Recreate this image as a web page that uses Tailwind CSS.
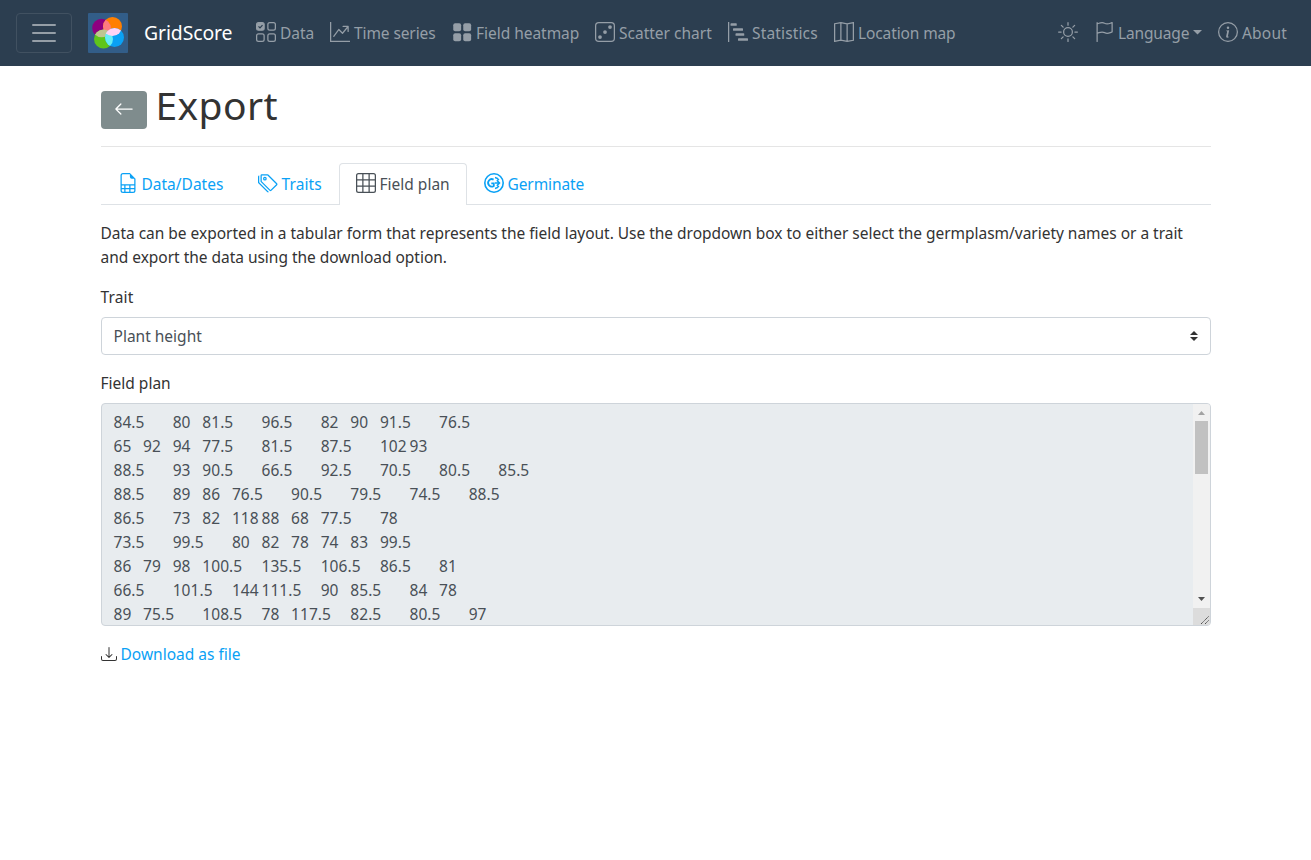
<!DOCTYPE html>
<html lang="en">
<head>
<meta charset="utf-8">
<title>GridScore</title>
<script src="https://cdn.jsdelivr.net/npm/@tailwindcss/browser@4"></script>
</head>
<body class="bg-white font-['Noto_Sans','Open_Sans',sans-serif] text-[15.5px] leading-6 text-[#333] h-[860px] overflow-hidden">
<nav class="h-[66px] bg-[#2c3e50] flex items-center text-[#959ea7] whitespace-nowrap">
  <button class="ml-4 w-14 h-10 rounded border border-[#415161] flex items-center justify-center">
    <svg class="w-[30px] h-[30px]" viewBox="0 0 30 30" stroke="#959ea7" stroke-width="2" stroke-linecap="round"><path d="M4 7h22M4 15h22M4 23h22"/></svg>
  </button>
  <svg class="ml-4 w-10 h-10" viewBox="0 0 40 40">
    <rect width="40" height="40" rx="1" fill="#325d88"/>
    <circle cx="13.5" cy="15" r="9.3" fill="#8e0080"/><circle cx="24.5" cy="13.5" r="9.5" fill="#ff7f00"/><circle cx="15.5" cy="26" r="9.5" fill="#5fc51a"/><circle cx="26.5" cy="24.5" r="9.5" fill="#0aa1f5"/>
    <clipPath id="a"><circle cx="13.5" cy="15" r="9.3"/></clipPath><clipPath id="b"><circle cx="24.5" cy="13.5" r="9.5"/></clipPath><clipPath id="c"><circle cx="15.5" cy="26" r="9.5"/></clipPath>
    <circle cx="24.5" cy="13.5" r="9.5" fill="#ff7b80" clip-path="url(#a)"/>
    <circle cx="15.5" cy="26" r="9.5" fill="#bfc591" clip-path="url(#a)"/>
    <circle cx="26.5" cy="24.5" r="9.5" fill="#66edf5" clip-path="url(#c)"/>
    <circle cx="26.5" cy="24.5" r="9.5" fill="#ffd3f5" clip-path="url(#b)"/>
  </svg>
  <span class="ml-4 w-28 text-white text-[19.4px] tracking-[-0.1px]"><span>GridScore</span></span>
  <a class="w-[74px] flex items-center gap-1"><svg class="w-5 h-5 shrink-0 -mt-0.5" viewBox="0 0 16 16" fill="none" stroke="currentColor"><rect x=".5" y=".5" width="6" height="6" rx="1.5" fill="currentColor"/><rect x="9.5" y=".5" width="6" height="6" rx="1.5"/><rect x=".5" y="9.5" width="6" height="6" rx="1.5"/><rect x="9.5" y="9.5" width="6" height="6" rx="1.5"/><path d="m2 3.5 1.2 1.2 2-2.2" stroke="#2c3e50"/></svg><span>Data</span></a>
  <a class="w-[123px] flex items-center gap-1"><svg class="w-5 h-5 shrink-0 -mt-0.5" viewBox="0 0 16 16" fill="currentColor"><path fill-rule="evenodd" d="M0 0h1v15h15v1H0V0zm10 3.5a.5.5 0 0 1 .5-.5h4a.5.5 0 0 1 .5.5v4a.5.5 0 0 1-1 0V4.9l-3.613 4.417a.5.5 0 0 1-.74.037L7.060 6.767l-3.656 5.027a.5.5 0 0 1-.808-.588l4-5.500a.5.5 0 0 1 .758-.060l2.609 2.610L13.445 4H10.500a.5.5 0 0 1-.5-.5z"/></svg><span class="tracking-[-0.1px]">Time series</span></a>
  <a class="w-[142px] flex items-center gap-1"><svg class="w-5 h-5 shrink-0 -mt-0.5 -ml-px" viewBox="0 0 16 16" fill="currentColor"><rect x="1" y="1" width="6.300" height="6.300" rx="1.500"/><rect x="9" y="1" width="6.300" height="6.300" rx="1.500"/><rect x="1" y="9" width="6.300" height="6.300" rx="1.500"/><rect x="9" y="9" width="6.300" height="6.300" rx="1.500"/></svg><span class="tracking-[-0.03px]">Field heatmap</span></a>
  <a class="w-[133px] flex items-center gap-1"><svg class="w-5 h-5 shrink-0 -mt-0.5" viewBox="0 0 16 16" fill="currentColor"><rect x=".5" y=".5" width="15" height="15" rx="2.500" fill="none" stroke="currentColor"/><circle cx="12" cy="4" r="1.500"/><circle cx="8" cy="8" r="1.500"/><circle cx="4" cy="12" r="1.500"/></svg><span>Scatter chart</span></a>
  <a class="w-[106px] flex items-center gap-1"><svg class="w-5 h-5 shrink-0 -mt-0.5" viewBox="0 0 16 16" fill="currentColor"><path d="M0 0h1v16H0z"/><rect x="2" y="1" width="5" height="2" rx=".5"/><rect x="4" y="5" width="8" height="2" rx=".5"/><rect x="6" y="9" width="7" height="2" rx=".5"/><rect x="8" y="13" width="8" height="2" rx=".5"/></svg><span class="tracking-[0.15px]">Statistics</span></a>
  <a class="w-[224px] flex items-center gap-1"><svg class="w-5 h-5 shrink-0 -mt-0.5" viewBox="0 0 16 16" fill="none" stroke="currentColor"><path d="M.5 1.400 5.500.5l5 .9 5-.9v14.100l-5 .9-5-.9-5 .9zM5.500.5v14.100M10.500 1.400v14.100"/></svg><span class="tracking-[-0.12px]">Location map</span></a>
  <a class="w-[36px]"><svg class="w-5 h-5 -mt-0.5" viewBox="0 0 16 16" fill="none" stroke="currentColor"><circle cx="8" cy="8" r="3.500"/><path stroke-linecap="round" d="M8 .5v2M8 13.500v2M.5 8h2M13.500 8h2M2.700 2.700l1.400 1.400M11.900 11.900l1.400 1.400M2.700 13.300l1.400-1.400M11.900 4.100l1.400-1.400"/></svg></a>
  <a class="w-[124px] flex items-center gap-1"><svg class="w-5 h-5 shrink-0 -mt-0.5" viewBox="0 0 16 16" fill="currentColor"><path d="M14.778.085A.5.5 0 0 1 15 .5V8a.5.5 0 0 1-.314.464L14.500 8l.186.464-.003.001-.006.003-.023.009a12.435 12.435 0 0 1-.397.150c-.264.095-.631.223-1.047.350-.816.252-1.879.523-2.710.523-.847 0-1.548-.280-2.158-.525l-.028-.010C7.680 8.710 7.140 8.500 6.500 8.500c-.700 0-1.638.230-2.437.477A19.626 19.626 0 0 0 3 9.342V15.500a.5.5 0 0 1-1 0V.5a.5.5 0 0 1 1 0v.282c.226-.079.496-.170.790-.260C4.606.272 5.670 0 6.500 0c.840 0 1.524.277 2.121.519l.043.018C9.286.788 9.828 1 10.500 1c.700 0 1.638-.230 2.437-.477a19.587 19.587 0 0 0 1.349-.476l.019-.007.004-.002h.001M14 1.221c-.220.078-.480.167-.766.255-.810.252-1.872.523-2.734.523-.886 0-1.592-.286-2.203-.534l-.008-.003C7.662 1.210 7.139 1 6.500 1c-.669 0-1.606.229-2.415.478A21.294 21.294 0 0 0 3 1.845v6.433c.220-.078.480-.167.766-.255C4.576 7.770 5.638 7.500 6.500 7.500c.847 0 1.548.280 2.158.525l.028.010C9.320 8.290 9.860 8.500 10.500 8.500c.668 0 1.606-.229 2.415-.478A21.317 21.317 0 0 0 14 7.655V1.222z"/></svg><span class="tracking-[-0.15px]">Language</span><svg class="w-[9px] h-[5px] shrink-0 -mt-0.5" viewBox="0 0 9 5" fill="currentColor"><path d="M0 0h9L4.500 4.500z"/></svg></a>
  <a class="flex items-center gap-1"><svg class="w-5 h-5 shrink-0 -mt-0.5" viewBox="0 0 16 16" fill="currentColor"><path d="M8 15A7 7 0 1 1 8 1a7 7 0 0 1 0 14zm0 1A8 8 0 1 0 8 0a8 8 0 0 0 0 16z"/><path d="m8.930 6.588-2.290.287-.082.380.450.083c.294.070.352.176.288.469l-.738 3.468c-.194.897.105 1.319.808 1.319.545 0 1.178-.252 1.465-.598l.088-.416c-.200.176-.492.246-.686.246-.275 0-.375-.193-.304-.533L8.930 6.588zM9 4.500a1 1 0 1 1-2 0 1 1 0 0 1 2 0z"/></svg><span class="tracking-[0.2px]">About</span></a>
</nav>
<main class="ml-[100.5px] w-[1110px] whitespace-nowrap">
  <header class="h-[81px] border-b border-[#e5e5e5] flex">
    <button class="mt-[25px] w-[46px] h-[38px] rounded bg-[#7f8c8d] flex items-center justify-center"><svg class="w-5 h-5 -mt-0.5" viewBox="0 0 16 16" fill="white"><path fill-rule="evenodd" d="M15 8a.5.5 0 0 0-.5-.5H2.707l3.147-3.146a.5.5 0 1 0-.708-.708l-4 4a.5.5 0 0 0 0 .708l4 4a.5.5 0 0 0 .708-.708L2.707 8.500H14.500A.5.5 0 0 0 15 8z"/></svg></button>
    <h1 class="ml-[9px] mt-[15px] text-[39px] leading-[48px] tracking-[0.4px]"><span>Export</span></h1>
  </header>
  <div class="mt-4 h-[42px] flex border-b border-[#dee2e6] text-[#0aa1f5]">
    <a class="w-[139px] pl-[17px] flex items-center gap-1"><svg class="w-5 h-5 shrink-0 -mt-0.5" viewBox="0 0 16 16" fill="currentColor"><path d="M14 14V4.500L9.500 0H4a2 2 0 0 0-2 2v12a2 2 0 0 0 2 2h8a2 2 0 0 0 2-2zM9.500 3A1.500 1.500 0 0 0 11 4.500h2V9H3V2a1 1 0 0 1 1-1h5.500v2zM3 12v-2h2v2H3zm0 1h2v2H4a1 1 0 0 1-1-1v-1zm3 2v-2h3v2H6zm4 0v-2h3v1a1 1 0 0 1-1 1h-2zm3-3h-3v-2h3v2zm-7 0v-2h3v2H6z"/></svg><span>Data/Dates</span></a>
    <a class="w-[99px] pl-[18px] flex items-center gap-1"><svg class="w-5 h-5 shrink-0 -mt-0.5" viewBox="0 0 16 16" fill="currentColor"><path d="M3 2v4.586l7 7L14.586 9l-7-7H3zM2 2a1 1 0 0 1 1-1h4.586a1 1 0 0 1 .707.293l7 7a1 1 0 0 1 0 1.414l-4.586 4.586a1 1 0 0 1-1.414 0l-7-7A1 1 0 0 1 2 6.586V2z"/><path d="M5.500 5a.5.5 0 1 1 0-1 .5.5 0 0 1 0 1zm0 1a1.500 1.500 0 1 0 0-3 1.500 1.500 0 0 0 0 3zM1 7.086a1 1 0 0 0 .293.707L8.750 15.250l-.043.043a1 1 0 0 1-1.414 0l-7-7A1 1 0 0 1 0 7.586V3a1 1 0 0 1 1-1v5.086z"/></svg><span class="tracking-[0.1px]">Traits</span></a>
    <a class="w-[128px] h-[42px] pb-px pl-4 shrink-0 flex items-center gap-1 rounded-t border border-b-0 border-[#dee2e6] bg-white text-[#495057]"><svg class="w-5 h-5 shrink-0 -mt-0.5" viewBox="0 0 16 16" fill="none" stroke="currentColor"><rect x=".5" y=".5" width="15" height="15" rx="1.500"/><path d="M.5 5.500h15M.5 10.500h15M5.500.5v15M10.500.5v15"/></svg><span>Field plan</span></a>
    <a class="pl-[17px] flex items-center gap-1"><svg class="w-5 h-5 shrink-0 -mt-0.5" viewBox="0 0 20 20" fill="none" stroke="currentColor"><circle cx="10" cy="10" r="9.200" stroke-width="1.600"/><path stroke-width="1.800" d="M9.600 6.600A3.700 3.700 0 1 0 9.800 13V10.400H7.300"/><path stroke-width="1.500" d="M11 4.500c1.800.4 3 1.200 3.800 2.700M11 15.500c1.800-.4 3-1.200 3.800-2.700M11 10h5M12.800 7.300l2.700 2.700-2.700 2.700"/></svg><span class="tracking-[-0.1px]">Germinate</span></a>
  </div>
  <p class="mt-4 tracking-[-0.025px]"><span>Data can be exported in a tabular form that represents the field layout. Use the dropdown box to either select the germplasm/variety names or a trait</span><br><span>and export the data using the download option.</span></p>
  <label class="block mt-4 tracking-[0.15px]"><span>Trait</span></label>
  <div class="mt-2 h-[38px] rounded border border-[#ced4da] pl-3 pr-3 flex items-center justify-between text-[#495057]"><span>Plant height</span><svg class="w-2 h-[10px]" viewBox="0 0 8 10" fill="#333"><path d="M0 4h8L4 0zM0 6h8L4 10z"/></svg></div>
  <label class="block mt-4"><span>Field plan</span></label>
  <div class="mt-2 h-[223px] rounded border border-[#ced4da] bg-[#e8ecef] flex overflow-hidden text-[#495057]">
<pre class="flex-1 pl-3 pt-1.5 font-['Noto_Sans','Open_Sans',sans-serif] tracking-[0.05px] [tab-size:29.6px]">84.5	80	81.5	96.5	82	90	91.5	76.5
65	92	94	77.5	81.5	87.5	102	93
88.5	93	90.5	66.5	92.5	70.5	80.5	85.5
88.5	89	86	76.5	90.5	79.5	74.5	88.5
86.5	73	82	118	88	68	77.5	78
73.5	99.5	80	82	78	74	83	99.5
86	79	98	100.5	135.5	106.5	86.5	81
66.5	101.5	144	111.5	90	85.5	84	78
89	75.5	108.5	78	117.5	82.5	80.5	97</pre>
    <div class="w-[17px] flex flex-col items-center bg-[#f1f1f1]">
      <svg class="w-[17px] h-[17px] shrink-0" viewBox="0 0 17 17" fill="#a3a3a3"><path d="M5 11h7L8.500 7z"/></svg>
      <div class="w-[13px] h-[53px] bg-[#c1c1c1]"></div>
      <div class="flex-1"></div>
      <svg class="w-[17px] h-[17px] shrink-0" viewBox="0 0 17 17" fill="#505050"><path d="M5 6h7L8.500 10z"/></svg>
      <svg class="w-[17px] h-[17px] shrink-0 bg-[#dcdcdc]" viewBox="0 0 17 17" stroke="#505050"><path d="M8 16l8-8M12 16l4-4" stroke-dasharray="1.400 .4"/></svg>
    </div>
  </div>
  <a class="mt-4 flex items-center gap-1 text-[#0aa1f5]"><svg class="w-4 h-4 shrink-0" viewBox="0 0 16 16" fill="#333"><path d="M.5 9.900a.5.5 0 0 1 .5.5v2.500a1 1 0 0 0 1 1h12a1 1 0 0 0 1-1v-2.500a.5.5 0 0 1 1 0v2.500a2 2 0 0 1-2 2H2a2 2 0 0 1-2-2v-2.500a.5.5 0 0 1 .5-.5z"/><path d="M7.646 11.854a.5.5 0 0 0 .708 0l3-3a.5.5 0 0 0-.708-.708L8.500 10.293V1.500a.5.5 0 0 0-1 0v8.793L5.354 8.146a.5.5 0 1 0-.708.708l3 3z"/></svg><span>Download as file</span></a>
</main>
</body>
</html>
